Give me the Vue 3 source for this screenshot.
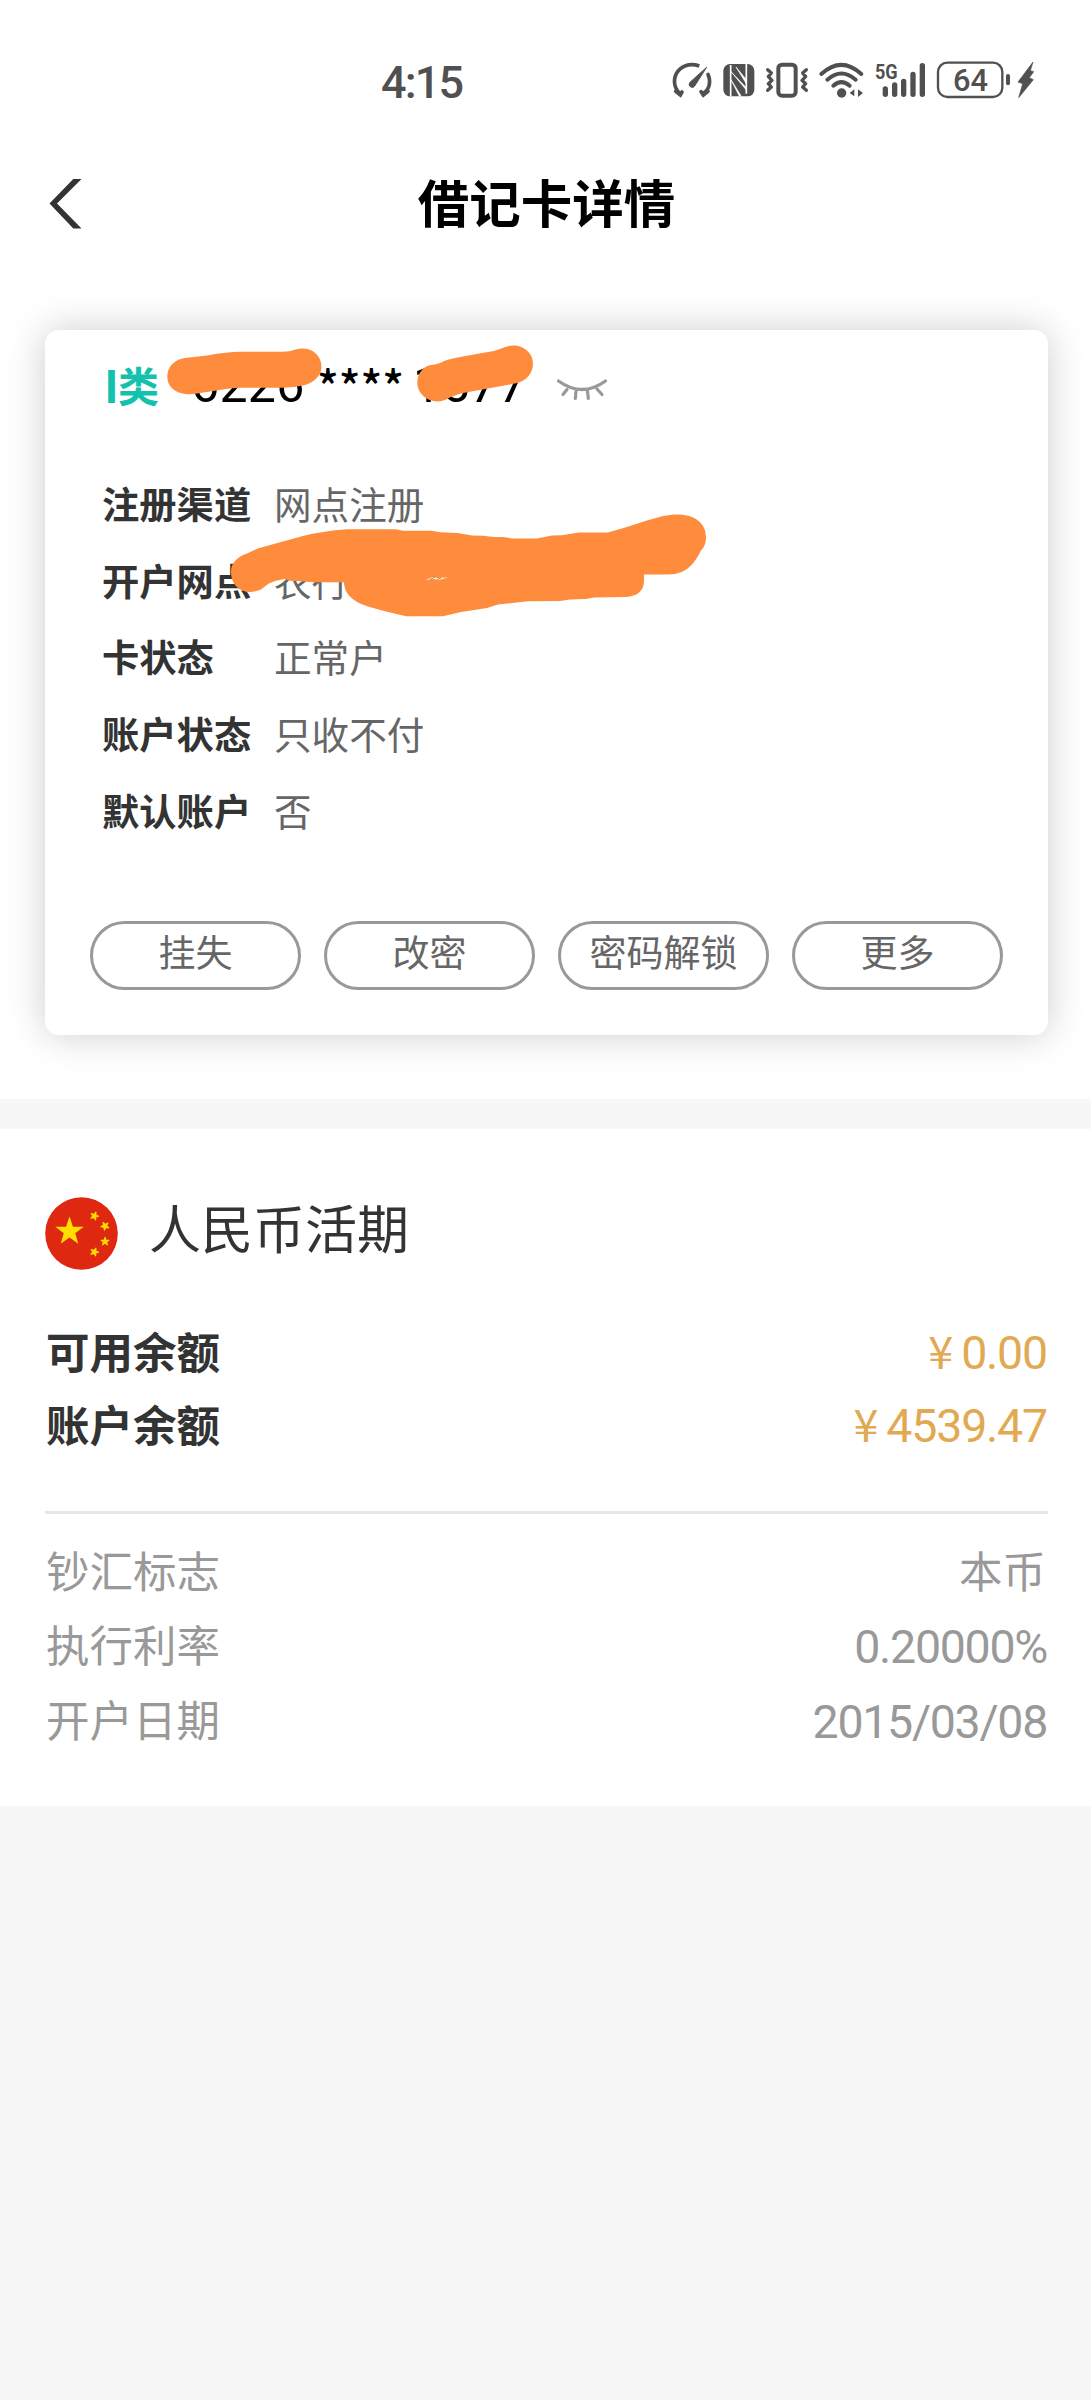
<script setup>
const info = [
  { label: '注册渠道', value: '网点注册' },
  { label: '开户网点', value: '农行' },
  { label: '卡状态', value: '正常户' },
  { label: '账户状态', value: '只收不付' },
  { label: '默认账户', value: '否' },
]
const actions = ['挂失', '改密', '密码解锁', '更多']
const balances = [
  { label: '可用余额', value: '0.00' },
  { label: '账户余额', value: '4539.47' },
]
const details = [
  { label: '钞汇标志', value: '本币', cjk: true },
  { label: '执行利率', value: '0.20000%' },
  { label: '开户日期', value: '2015/03/08' },
]
const star = '0,-10 2.3,-3.2 9.5,-3.1 3.8,1.2 5.9,8.1 0,4 -5.9,8.1 -3.8,1.2 -9.5,-3.1 -2.3,-3.2'
const smallStars = [
  [49.5, 19, 20],
  [60, 29, 45],
  [60, 44.5, 0],
  [49.5, 55, 20],
]
</script>

<template>
  <div class="page">
    <header class="status">
      <span class="time">4:15</span>
      <div class="icons">
        <!-- performance gauge -->
        <svg width="57" height="70" viewBox="0 0 171 210" fill="none" stroke="#505050" stroke-width="11" stroke-linecap="round">
          <path d="M62 147C44 134 38 108 49 86C61 63 88 53 118 63" stroke-linecap="butt" />
          <path d="M144 88C153 108 150 133 129 145" />
          <path d="M47 139L61 150L66 141M144 139L130 150L123 140" />
          <path d="M139 68L104 123A9 9 0 1 1 89 113Z" fill="#505050" stroke-width="3" stroke-linejoin="round" />
        </svg>
        <!-- nfc -->
        <svg width="43" height="70" viewBox="171 0 129 210">
          <rect x="190" y="57" width="93" height="97" rx="20" fill="#505050" />
          <path d="M212 60V154M259 55V146" stroke="#fff" stroke-width="5" />
          <path d="M228 66L259 104V116ZM213 80L259 128V135ZM213 104L244 154H238Z" fill="#fff" stroke="#fff" stroke-width="2" />
        </svg>
        <!-- vibrate -->
        <svg width="52" height="70" viewBox="300 0 156 210" fill="none" stroke="#505050" stroke-linejoin="round" stroke-linecap="round">
          <rect x="355" y="59" width="52" height="93" rx="11" stroke-width="12" />
          <path d="M323 74L334 84L325 95L336 106L325 116L334 126L323 136M439 74L428 84L437 95L426 106L437 116L428 126L439 136" stroke-width="10" />
        </svg>
        <!-- wifi -->
        <svg width="55" height="70" viewBox="456 0 165 210" fill="none" stroke="#505050" stroke-width="12" stroke-linecap="round">
          <path d="M484 87Q544 32 604 87M502 104Q544 67 587 104M520 122Q544 101 569 122" />
          <circle cx="545" cy="144" r="14" fill="#505050" stroke="none" />
          <path d="M583 133V154L569 144ZM594 133V156L609 144Z" fill="#505050" stroke="none" />
        </svg>
        <!-- signal -->
        <svg width="61" height="70" viewBox="621 0 183 210" stroke="#505050" stroke-width="16" stroke-linecap="round">
          <path d="M676 132V148M704 120V148M731 109V148M759 88V148M787 62V148" />
          <text class="net" x="645" y="103" textLength="68" lengthAdjust="spacingAndGlyphs">5G</text>
        </svg>
        <!-- battery -->
        <svg width="122" height="70" viewBox="804 0 366 210" fill="none" stroke="#505050">
          <rect x="834" y="53" width="193" height="103" rx="28" stroke-width="7" />
          <path d="M1044 93V115" stroke-width="12" stroke-linecap="round" />
          <text class="level" x="879" y="139" textLength="105" lengthAdjust="spacingAndGlyphs">64</text>
          <path d="M1119 51L1074 111L1088 116L1076 158L1120 104L1108 98L1121 80L1111 77Z" fill="#505050" stroke-width="2" />
        </svg>
      </div>
    </header>

    <nav class="bar">
      <svg class="back" width="33" height="51" viewBox="0 0 33 51"><path d="M32.500 1H24.300L0.500 25.500L24.300 50.500H32.500L8 25.500Z" fill="#333" /></svg>
      <h1>借记卡详情</h1>
    </nav>

    <div class="card-area">
      <section class="card">
        <div class="number">
          <b class="type"><span class="roman">I</span>类</b>
          <span class="digits first">6226</span>
          <span class="stars">****</span>
          <span class="digits last">1577</span>
          <svg class="eye" width="52" height="26" viewBox="0 0 52 26" fill="none" stroke="#999" stroke-width="3.200" stroke-linecap="round">
            <path d="M2.500 4Q26 21 49.500 4M11 12.500L7 17.500M20 14L19.300 21.500M31.500 14L32.300 21.500M41 12L46 17.500" />
          </svg>
        </div>
        <dl class="info">
          <div v-for="row in info" :key="row.label">
            <dt>{{ row.label }}</dt>
            <dd>{{ row.value }}</dd>
          </div>
        </dl>
        <div class="actions">
          <button v-for="a in actions" :key="a">{{ a }}</button>
        </div>
        <!-- marker strokes over the private parts -->
        <svg class="marker" width="1003" height="705" viewBox="45 330.500 1003 705" fill="#ff8c3c">
          <path d="M185 358.500L207 356Q228 352.300 240 352.300H283Q290 352 294 350.500C308 345.500 321 353 321.500 367C321.500 377 313 383 305 385.500Q295 388 283 388.300H243Q233 388 223 390L197 394C182 397 167.300 391 167.300 377C167.300 367 175 359.500 185 358.500Z" />
          <path d="M431 365.500Q439 364.500 444 361.500Q448 360 455 358.500L482 353.500Q495 352 504 348C518 342 533 351 533 364C533 374 526 382 515 384L463 393.500Q453 396 446 400C433 406 417.300 397 417.300 383C417.300 374 423 367 431 365.500Z" />
          <path d="M231 572C231 563 238 557 247 554L257.700 549L281 542.500L302 536.700Q322 531.500 347 529.700H396L403 531.200H431.800L440 532.800L458 533.500L472 536L483 536.200L494 537.500H503L512 538.900H537L552 536L562 535.800L579 532.900H608Q620 530 646 521.300L663 516.500C689 511 706 520 706 538Q706 546 701 551Q696 561 691 566Q683 575 668 575H644V581Q644 597 624 597.500L594 598L586 599.500L570 600L560 601.500L528 601.700L498 605L487 608.500L461 612.500L443 616.700H406L384 611.500L367 606.700Q344 599 344 582.700H313L298 581.500H291L284.500 579.500Q274 581 268 584.500L261 590Q254 593 246 592.300Q231 588 231 572Z" />
          <path d="M425 580.500L433 577.500L437 578.500L448 578L439 580.500L434 579.500Z" fill="#fff3e0" />
          <path d="M430 580L435 577.500M437 580L441 578.500" stroke="#8a6a4c" stroke-width="0.8" />
        </svg>
      </section>
    </div>

    <section class="account">
      <div class="currency">
        <svg width="73" height="73" viewBox="0 0 73 73">
          <circle cx="36.500" cy="36.500" r="36.300" fill="#de2810" />
          <g fill="#ffde00">
            <polygon :points="star" transform="translate(24.500 34.500) scale(1.5)" />
            <polygon v-for="(s, i) in smallStars" :key="i" :points="star" stroke="#ffde00" stroke-width="2.500" stroke-linejoin="round" :transform="`translate(${s[0]} ${s[1]}) rotate(${s[2]}) scale(.42)`" />
          </g>
        </svg>
        <h2>人民币活期</h2>
      </div>
      <div v-for="b in balances" :key="b.label" class="row balance">
        <b>{{ b.label }}</b>
        <span class="amount"><i>¥</i>{{ b.value }}</span>
      </div>
      <hr />
      <div v-for="d in details" :key="d.label" class="row detail">
        <span>{{ d.label }}</span>
        <span :class="d.cjk ? 'text' : 'num'">{{ d.value }}</span>
      </div>
    </section>
  </div>
</template>

<style>
body { background: #f7f7f7; }
</style>

<style scoped>
* { box-sizing: border-box; margin: 0; padding: 0; }
.page {
  width: 1091px;
  height: 2400px;
  background: #f7f7f7;
  font-family: "Noto Sans CJK SC", sans-serif;
  color: #333;
  overflow: hidden;
}
.status {
  height: 130px;
  background: #fff;
  display: flex;
  justify-content: space-between;
  align-items: flex-start;
  padding: 45px 41px 0 381px;
}
.time { font: 500 45px/75px Roboto, sans-serif; letter-spacing: -1.800px; color: #505050; }
.icons { display: flex; }
.net { font: 700 60px Roboto, sans-serif; fill: #505050; stroke: none; }
.level { font: 500 93px Roboto, sans-serif; fill: #505050; stroke: none; }
.bar {
  height: 149px;
  background: #fff;
  display: grid;
  grid-template-columns: 90px 1fr 88px;
  align-items: start;
}
.back { margin: 48px 0 0 49px; }
.bar h1 { font-size: 51.500px; font-weight: 700; line-height: 60px; margin-top: 41px; text-align: center; color: #000; }
.card-area { height: 820px; padding: 51px 43px 0 45px; background: #fff; }
.card {
  position: relative;
  height: 705px;
  border-radius: 14px;
  background: #fff;
  box-shadow: 0 0 38px rgba(0, 0, 0, .2);
}
.number { display: flex; height: 115px; padding: 24px 0 0 59px; line-height: 60px; }
.type { font-size: 41px; color: #12c2ac; display: flex; width: 89px; }
.roman { font-size: 45px; width: 14px; }
.digits { font-family: Roboto, sans-serif; font-size: 50px; letter-spacing: .3px; color: #000; margin-top: 1px; }
.first { width: 126px; margin-left: -2px; }
.stars { font-size: 45px; color: #000; width: 92px; margin-top: 1px; font-weight: 500; }
.last { width: 130px; padding-left: 4px; }
.eye { margin: 23px 0 0 17px; }
.info { height: 436px; padding: 25px 0 0 57px; }
.info div { display: flex; height: 76.700px; line-height: 66px; font-size: 37.300px; }
.info dt { width: 172px; font-weight: 700; color: #333; }
.info dd { color: #666; font-size: 37.600px; }
.actions { display: flex; justify-content: space-between; padding: 0 45px; margin-top: 40px; }
.actions button {
  width: 211px;
  height: 69px;
  border: 3px solid #999;
  border-radius: 35px;
  background: none;
  font: 400 37px/54px "Noto Sans CJK SC", sans-serif;
  padding-bottom: 9px;
  color: #666;
  white-space: nowrap;
}
.marker { position: absolute; left: 0; top: 0; }
.account {
  height: 677px;
  margin-top: 30px;
  background: #fff;
  padding: 68px 43px 0 45px;
}
.currency { display: flex; height: 117px; }
.currency h2 { font-size: 52px; font-weight: 400; line-height: 59px; margin-left: 31px; }
.row { display: flex; justify-content: space-between; padding: 0 1px 0 1px; font-size: 43.500px; line-height: 73px; height: 73px; }
.amount, .num { font-family: Roboto, sans-serif; font-size: 46.500px; letter-spacing: -1.200px; }
.amount { color: #e2a953; margin-top: 3px; }
.amount i { font: 400 45px/1 "Noto Sans CJK SC", sans-serif; margin-right: 9px; }
hr { border: 0; height: 3px; background: #e6e6e6; margin: 51px 0 19px; }
.detail { color: #999; height: 74.300px; line-height: 74px; }
.text { margin-right: 1px; }
.num { margin-top: 3px; letter-spacing: -1.300px; }
</style>
